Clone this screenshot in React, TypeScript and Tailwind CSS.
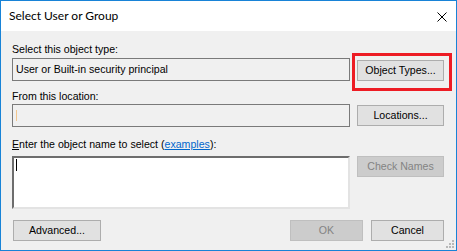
import React from 'react';

const font = { fontFamily: '"Liberation Sans", Arial, sans-serif' };

function Btn({ label, disabled, className = '' }: { label: string; disabled?: boolean; className?: string }) {
  return (
    <div
      className={`h-[21px] flex items-center justify-center border text-[10.6px] leading-[13px] ${
        disabled ? 'bg-[#cccccc] border-[#bfbfbf] text-[#838383]' : 'bg-[#e1e1e1] border-[#adadad] text-black'
      } ${className}`}
    >
      {label}
    </div>
  );
}

export default function App() {
  return (
    <div
      className="relative w-[457px] h-[251px] border border-[#1883d7] bg-[#f0f0f0] flex flex-col overflow-hidden"
      style={font}
    >
      {/* title bar */}
      <div className="h-[30px] bg-white flex items-center justify-between pl-[8px] pr-[9px] shrink-0">
        <span className="text-[12px] text-black" style={{ fontFamily: 'Lato, "Noto Sans", sans-serif' }}>
          Select User or Group
        </span>
        <svg width="10" height="10" viewBox="0 0 10 10" className="mt-[1px]">
          <path d="M0.5 0.5 L9.5 9.5 M9.5 0.5 L0.5 9.5" stroke="#000" strokeWidth="1" />
        </svg>
      </div>

      <div className="flex flex-col pl-[11px] pr-[12px] text-[10.6px] leading-[13px] text-black">
        <div className="mt-[12px] h-[13px]">Select this object type:</div>
        <div className="mt-[2px] flex gap-[7px]">
          <div className="w-[338px] h-[23px] border border-[#7a7a7a] bg-[#f0f0f0] flex items-center pl-[3px]">
            User or Built-in security principal
          </div>
          <Btn label="Object Types..." className="w-[87px] mt-[2px]" />
        </div>

        <div className="mt-[9px] h-[13px]">From this location:</div>
        <div className="mt-[1px] flex gap-[7px]">
          <div className="w-[338px] h-[23px] border border-[#7a7a7a] bg-[#f0f0f0] flex items-center pl-[3px]">
            <div className="w-[1px] h-[11px] bg-[#f2c68e]" />
          </div>
          <Btn label="Locations..." className="w-[87px] mt-[1px]" />
        </div>

        <div className="mt-[11px] h-[13px]">
          <span className="underline">E</span>nter the object name to select (
          <span className="text-[#0066cc] underline">examples</span>):
        </div>
        <div className="mt-[5px] flex gap-[7px]">
          <div className="w-[338px] h-[53px] bg-white border-2 border-t-[#6d6d6d] border-l-[#6d6d6d] border-r-[#e3e3e3] border-b-[#e3e3e3] pl-[2px] pt-[1px]">
            <div className="w-[1px] h-[12px] bg-black" />
          </div>
          <Btn label="Check Names" disabled className="w-[87px]" />
        </div>

        <div className="mt-[11px] flex items-center">
          <Btn label="Advanced..." className="w-[88px] ml-[1px]" />
          <div className="flex-1" />
          <Btn label="OK" disabled className="w-[73px]" />
          <Btn label="Cancel" className="w-[73px] ml-[8px]" />
        </div>
      </div>

      {/* annotation box */}
      <div className="absolute left-[351px] top-[52px] w-[100px] h-[38px] border-[3px] border-[#ed1c24]" />

      {/* size grip */}
      <svg width="10" height="10" viewBox="0 0 10 10" className="absolute right-[1px] bottom-[1px]">
        <rect x="7" y="7" width="2" height="2" fill="#b8b8b8" />
        <rect x="4" y="7" width="2" height="2" fill="#b8b8b8" />
        <rect x="1" y="7" width="2" height="2" fill="#b8b8b8" />
        <rect x="7" y="4" width="2" height="2" fill="#b8b8b8" />
        <rect x="4" y="4" width="2" height="2" fill="#b8b8b8" />
        <rect x="7" y="1" width="2" height="2" fill="#b8b8b8" />
      </svg>
    </div>
  );
}
